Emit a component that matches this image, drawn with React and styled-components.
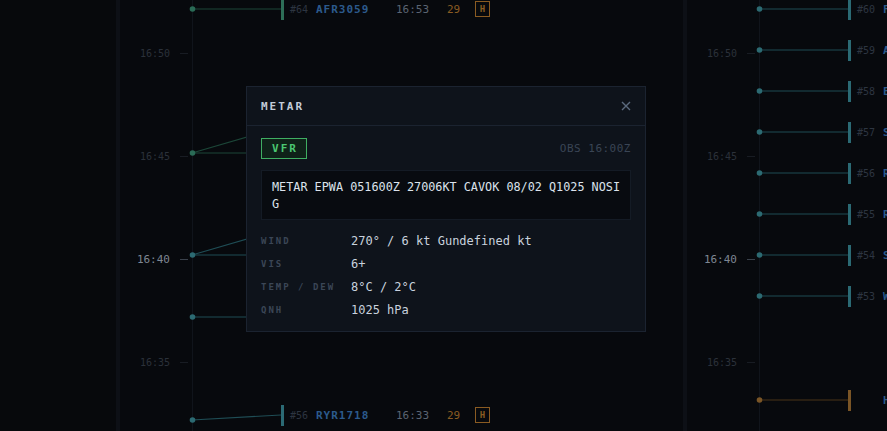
import React from "react"
import styled, { createGlobalStyle } from "styled-components"

const GlobalStyle = createGlobalStyle`
  html, body {
    margin: 0;
    padding: 0;
    background: #07090d;
    overflow: hidden;
  }
  * {
    box-sizing: border-box;
  }
`

const MONO = `"DejaVu Sans Mono", "Liberation Mono", monospace`

const LABEL_Y = { "16:50": 53, "16:45": 156, "16:40": 259, "16:35": 362 }

const COLORS = {
  green: { line: "#1c4638", dot: "#2a6b56", bar: "#2d6e57" },
  teal: { line: "#1f4d55", dot: "#2c6a72", bar: "#2b6a74" },
  orange: { line: "#4a3418", dot: "#7a5526", bar: "#7a5526" },
}

const Screen = styled.div`
  display: flex;
  width: 887px;
  height: 431px;
  background: #07090d;
  font-family: ${MONO};
  position: relative;
  overflow: hidden;
`

const Rail = styled.aside`
  width: 116px;
  flex: none;
  background: #07090c;
`

const Divider = styled.div`
  width: 4px;
  flex: none;
  background: #0d1016;
`

const Panel = styled.section`
  position: relative;
  width: ${p => p.$width}px;
  flex: none;
  height: 100%;
  overflow: hidden;
`

const Axis = styled.div`
  position: absolute;
  left: 72px;
  top: 0;
  bottom: 0;
  width: 1px;
  background: #10141b;
`

const Wires = styled.svg`
  position: absolute;
  left: 0;
  top: 0;
`

const TimeMark = styled.div`
  position: absolute;
  left: 0;
  width: 68px;
  display: flex;
  align-items: center;
  justify-content: flex-end;
  gap: 10px;
  height: 14px;
  font-size: ${p => (p.$now ? "11px" : "10px")};
  color: ${p => (p.$now ? "#7e8793" : "#2b313a")};
  &::after {
    content: "";
    width: 8px;
    height: 1px;
    background: ${p => (p.$now ? "#3a414b" : "#181c23")};
  }
`

const Card = styled.div`
  position: absolute;
  left: 161px;
  height: 22px;
  display: flex;
  align-items: center;
  white-space: nowrap;
`

const Bar = styled.span`
  width: 3px;
  height: 21px;
  background: ${p => p.$color};
  margin-right: 6px;
`

const Seq = styled.span`
  width: 26px;
  font-size: 10px;
  color: #2d3541;
`

const Callsign = styled.span`
  width: 80px;
  font-size: 11px;
  font-weight: bold;
  letter-spacing: 1px;
  color: #2c5a8c;
`

const Eta = styled.span`
  width: 51px;
  font-size: 11px;
  color: #5b6472;
`

const Stand = styled.span`
  width: 28px;
  font-size: 11px;
  color: #8a5b22;
`

const Cat = styled.span`
  width: 15px;
  height: 16px;
  border: 1px solid #8a5b22;
  color: #8a5b22;
  font-size: 9px;
  font-weight: bold;
  display: flex;
  align-items: center;
  justify-content: center;
`

const Modal = styled.div`
  position: absolute;
  left: 246px;
  top: 86px;
  width: 400px;
  height: 246px;
  background: #0e131b;
  border: 1px solid #1b2330;
  display: flex;
  flex-direction: column;
`

const ModalHead = styled.header`
  height: 39px;
  flex: none;
  display: flex;
  align-items: center;
  justify-content: space-between;
  padding: 0 14px;
  border-bottom: 1px solid #1b2330;
`

const ModalTitle = styled.h2`
  margin: 0;
  font-size: 11px;
  font-weight: bold;
  letter-spacing: 2px;
  color: #c3ccd8;
`

const Close = styled.button`
  background: none;
  border: 0;
  padding: 0;
  width: 14px;
  height: 14px;
  display: flex;
  align-items: center;
  justify-content: center;
  margin-right: -2px;
`

const ModalBody = styled.div`
  padding: 12px 14px 10px;
  display: flex;
  flex-direction: column;
`

const TopRow = styled.div`
  display: flex;
  align-items: center;
  justify-content: space-between;
`

const Category = styled.span`
  width: 46px;
  height: 21px;
  border: 1px solid #3fae62;
  background: #0f2219;
  color: #4bc772;
  font-size: 11px;
  font-weight: bold;
  letter-spacing: 2px;
  display: flex;
  align-items: center;
  justify-content: center;
  padding-left: 2px;
`

const Obs = styled.span`
  font-size: 11px;
  letter-spacing: 0.5px;
  color: #3a4555;
`

const Raw = styled.pre`
  margin: 11px 0 0;
  height: 50px;
  padding: 8px 10px;
  background: #080b10;
  border: 1px solid #141b25;
  font-family: ${MONO};
  font-size: 11.8px;
  line-height: 17px;
  color: #dce3ec;
  white-space: pre-wrap;
  word-break: break-all;
`

const Details = styled.dl`
  margin: 9px 0 0;
  display: grid;
  grid-template-columns: 90px 1fr;
  grid-auto-rows: 23px;
  align-items: center;
`

const Label = styled.dt`
  font-size: 9px;
  font-weight: bold;
  letter-spacing: 2px;
  color: #3b4656;
`

const Value = styled.dd`
  margin: 0;
  font-size: 12px;
  color: #c9d2de;
`

// connectors from the time axis to each strip (some strips sit under the modal)
const leftWires = [
  { y: 9, to: 9, c: "green", dot: true },
  { y: 153, to: 127, c: "green", dot: true },
  { y: 153, to: 153, c: "green" },
  { y: 255, to: 229, c: "teal", dot: true },
  { y: 255, to: 255, c: "teal" },
  { y: 317, to: 317, c: "teal", dot: true },
  { y: 420, to: 415, c: "teal", dot: true },
]

const leftCards = [
  { y: 9, c: "green", seq: "#64", cs: "AFR3059", eta: "16:53" },
  { y: 415, c: "teal", seq: "#56", cs: "RYR1718", eta: "16:33" },
  { y: 442, c: "teal", seq: "", cs: "", eta: "" },
]

const rightCards = [
  { y: 9, c: "teal", seq: "#60", cs: "FIN1HK" },
  { y: 50, c: "teal", seq: "#59", cs: "AFR1142" },
  { y: 91, c: "teal", seq: "#58", cs: "EZY81QA" },
  { y: 132, c: "teal", seq: "#57", cs: "SAS1753" },
  { y: 173, c: "teal", seq: "#56", cs: "RYR2GK" },
  { y: 214, c: "teal", seq: "#55", cs: "RYR4FT" },
  { y: 255, c: "teal", seq: "#54", cs: "SWR1JE" },
  { y: 296, c: "teal", seq: "#53", cs: "WZZ3591" },
  { y: 400, c: "orange", seq: "", cs: "HOP12" },
  { y: 441, c: "orange", seq: "", cs: "" },
]

const Timeline = ({ width, wires, cards, showDetail }) => (
  <Panel $width={width}>
    <Axis />
    {Object.entries(LABEL_Y).map(([t, y]) => (
      <TimeMark key={t} $now={t === "16:40"} style={{ top: y - 7 }}>
        {t}
      </TimeMark>
    ))}
    <Wires width={width} height={431}>
      {wires.map((w, i) => (
        <line
          key={i}
          x1={72}
          y1={w.y}
          x2={161}
          y2={w.to}
          stroke={COLORS[w.c].line}
          strokeWidth="1.2"
        />
      ))}
      {wires
        .filter(w => w.dot)
        .map((w, i) => (
          <circle key={i} cx={72.5} cy={w.y} r="2.8" fill={COLORS[w.c].dot} />
        ))}
    </Wires>
    {cards.map(c => (
      <Card key={c.y} style={{ top: c.y - 11 }}>
        <Bar $color={COLORS[c.c].bar} />
        {c.cs && (
          <>
            <Seq>{c.seq}</Seq>
            <Callsign>{c.cs}</Callsign>
            {showDetail && (
              <>
                <Eta>{c.eta}</Eta>
                <Stand>29</Stand>
                <Cat>H</Cat>
              </>
            )}
          </>
        )}
      </Card>
    ))}
  </Panel>
)

const rightWires = rightCards
  .filter(c => c.y < 431)
  .map(c => ({ y: c.y, to: c.y, c: c.c, dot: true }))

const CloseIcon = () => (
  <svg width="10" height="10" viewBox="0 0 10 10">
    <path d="M1 1 L9 9 M9 1 L1 9" stroke="#5b6a7e" strokeWidth="1.4" />
  </svg>
)

export default function App() {
  return (
    <>
      <GlobalStyle />
      <Screen>
        <Rail />
        <Divider />
        <Timeline width={563} wires={leftWires} cards={leftCards} showDetail />
        <Divider />
        <Timeline width={200} wires={rightWires} cards={rightCards} />

        <Modal>
          <ModalHead>
            <ModalTitle>METAR</ModalTitle>
            <Close aria-label="close">
              <CloseIcon />
            </Close>
          </ModalHead>
          <ModalBody>
            <TopRow>
              <Category>VFR</Category>
              <Obs>OBS 16:00Z</Obs>
            </TopRow>
            <Raw>METAR EPWA 051600Z 27006KT CAVOK 08/02 Q1025 NOSIG</Raw>
            <Details>
              <Label>WIND</Label>
              <Value>270° / 6 kt Gundefined kt</Value>
              <Label>VIS</Label>
              <Value>6+</Value>
              <Label>TEMP / DEW</Label>
              <Value>8°C / 2°C</Value>
              <Label>QNH</Label>
              <Value>1025 hPa</Value>
            </Details>
          </ModalBody>
        </Modal>
      </Screen>
    </>
  )
}
